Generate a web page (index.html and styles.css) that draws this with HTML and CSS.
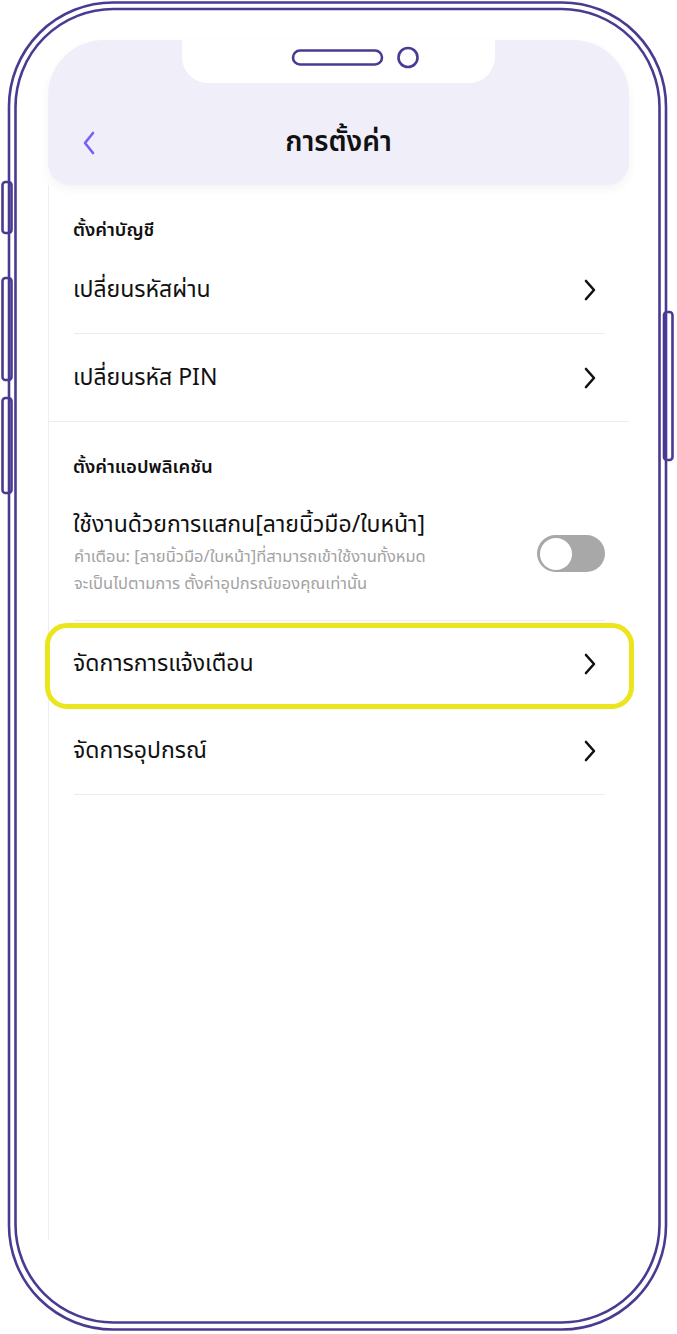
FILE: index.html
```html
<!DOCTYPE html>
<html lang="th">
<head>
<meta charset="utf-8">
<title>การตั้งค่า</title>
<link rel="stylesheet" href="styles.css">
</head>
<body>
<div class="device">
  <div class="screen">
    <header class="topbar">
      <div class="notch"></div>
      <div class="titlebar">
        <button class="back" aria-label="back">
          <svg width="14" height="24" viewBox="0 0 14 24"><path d="M11 2 L3 12 L11 22" fill="none" stroke="#7b5cf6" stroke-width="2.6" stroke-linecap="round" stroke-linejoin="round"/></svg>
        </button>
        <h1 class="title">การตั้งค่า</h1>
      </div>
    </header>
    <main class="content">
      <section class="group">
        <h2 class="group-title">ตั้งค่าบัญชี</h2>
        <div class="row">
          <span class="row-label">เปลี่ยนรหัสผ่าน</span>
          <svg class="chev" width="14" height="22" viewBox="0 0 14 22"><path d="M3 2 L11 11 L3 20" fill="none" stroke="#111" stroke-width="2.6" stroke-linecap="round" stroke-linejoin="round"/></svg>
        </div>
        <div class="row last">
          <span class="row-label">เปลี่ยนรหัส PIN</span>
          <svg class="chev" width="14" height="22" viewBox="0 0 14 22"><path d="M3 2 L11 11 L3 20" fill="none" stroke="#111" stroke-width="2.6" stroke-linecap="round" stroke-linejoin="round"/></svg>
        </div>
      </section>
      <section class="group">
        <h2 class="group-title">ตั้งค่าแอปพลิเคชัน</h2>
        <div class="row toggle-row">
          <div class="toggle-text">
            <div class="row-label">ใช้งานด้วยการแสกน[ลายนิ้วมือ/ใบหน้า]</div>
            <p class="hint">คำเตือน: [ลายนิ้วมือ/ใบหน้า]ที่สามารถเข้าใช้งานทั้งหมด<br>จะเป็นไปตามการ ตั้งค่าอุปกรณ์ของคุณเท่านั้น</p>
          </div>
          <div class="switch"><span class="knob"></span></div>
        </div>
        <div class="row highlighted">
          <span class="row-label">จัดการการแจ้งเตือน</span>
          <svg class="chev" width="14" height="22" viewBox="0 0 14 22"><path d="M3 2 L11 11 L3 20" fill="none" stroke="#111" stroke-width="2.6" stroke-linecap="round" stroke-linejoin="round"/></svg>
          <span class="focus-ring"></span>
        </div>
        <div class="row">
          <span class="row-label">จัดการอุปกรณ์</span>
          <svg class="chev" width="14" height="22" viewBox="0 0 14 22"><path d="M3 2 L11 11 L3 20" fill="none" stroke="#111" stroke-width="2.6" stroke-linecap="round" stroke-linejoin="round"/></svg>
        </div>
      </section>
    </main>
  </div>

  <svg class="frame" width="677" height="1334" viewBox="0 0 677 1334">
    <g fill="#fff" stroke="#4b3a92" stroke-width="2.6">
      <rect x="2.5" y="182" width="9" height="51" rx="3"/>
      <rect x="2.5" y="278" width="9" height="102" rx="3"/>
      <rect x="2.5" y="398" width="9" height="95" rx="3"/>
      <rect x="664" y="312" width="8.5" height="148" rx="3"/>
    </g>
    <g fill="none" stroke="#4b3a92" stroke-width="2.6">
      <rect x="9" y="2.5" width="657" height="1327" rx="104" ry="104"/>
      <rect x="15.5" y="9" width="644" height="1313.5" rx="98" ry="98"/>
      <rect x="293" y="50.5" width="89" height="14" rx="7"/>
      <circle cx="408" cy="57.5" r="9.5"/>
    </g>
  </svg>
</div>
</body>
</html>
```
FILE: styles.css
```css
* { box-sizing: border-box; }
html, body { margin: 0; padding: 0; background: #fff; }
body {
  font-family: "Noto Sans Thai", "Noto Sans", "DejaVu Sans", sans-serif;
  color: #111;
}
.device {
  position: relative;
  width: 677px;
  height: 1334px;
  overflow: hidden;
  background: #fff;
}
.screen {
  margin-left: 48px;
  width: 581px;
  padding-top: 40px;
}
.topbar {
  position: relative;
  height: 145px;
  background: #f0eef9;
  border-radius: 56px 56px 22px 22px;
  box-shadow: 0 4px 8px rgba(60, 50, 120, 0.06);
  display: flex;
  align-items: flex-end;
  padding-bottom: 20px;
}
.notch {
  position: absolute;
  left: 134px;
  top: 0;
  width: 313px;
  height: 43px;
  background: #fff;
  border-radius: 0 0 26px 26px;
}
.titlebar {
  position: relative;
  width: 100%;
  height: 44px;
  display: flex;
  align-items: center;
  justify-content: center;
}
.back {
  position: absolute;
  left: 34px;
  top: 10px;
  border: 0;
  background: none;
  padding: 0;
  display: flex;
}
.title {
  margin: 0;
  font-size: 28px;
  font-weight: 600;
  color: #111;
  line-height: 44px;
}
.content {
  height: 1055px;
  border-left: 1px solid #eeeef2;
}
.group {
  border-bottom: 1.5px solid #ececec;
}
.group:last-child { border-bottom: 0; }
.group-title {
  margin: 0;
  height: 62px;
  padding: 32px 24px 0;
  font-size: 18.5px;
  font-weight: 600;
  line-height: 26px;
}
.row {
  position: relative;
  margin: 0 24px 0 25px;
  height: 87px;
  display: flex;
  align-items: center;
  justify-content: space-between;
  border-bottom: 1.5px solid #ececec;
}
.row.last { border-bottom: 0; }
.row-label {
  font-size: 23px;
  line-height: 32px;
  margin-left: -1px;
}
.chev { margin-right: 8px; }
.toggle-row {
  height: 137px;
  align-items: flex-start;
  padding-top: 25px;
}
.hint {
  margin: 2px 0 0;
  font-size: 16.5px;
  line-height: 27px;
  color: #a3a3a3;
}
.switch {
  margin-top: 26px;
  width: 68px;
  height: 37px;
  border-radius: 19px;
  background: #a8a8a8;
  padding: 2.5px;
}
.knob {
  display: block;
  width: 32px;
  height: 32px;
  border-radius: 50%;
  background: #fff;
}
.focus-ring {
  position: absolute;
  left: -29px;
  right: -29px;
  top: 2px;
  bottom: -2px;
  border: 5px solid #eae51c;
  border-radius: 22px;
  pointer-events: none;
}
.frame {
  position: absolute;
  left: 0;
  top: 0;
  pointer-events: none;
}
```
